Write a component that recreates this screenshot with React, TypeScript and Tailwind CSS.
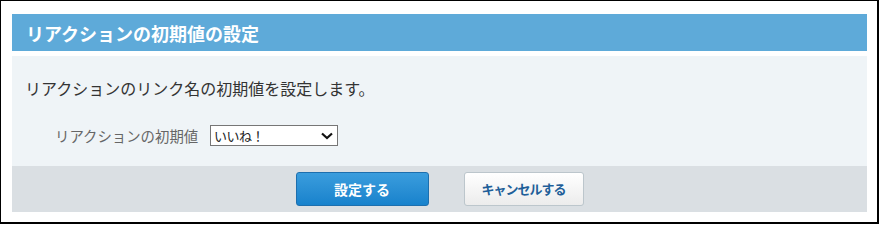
import React from "react";

export default function App() {
  const font = { fontFamily: '"Noto Sans CJK JP", "Noto Sans", sans-serif' };
  return (
    <div style={font} className="w-[879px] h-[224px] bg-white">
      <div className="w-[879px] h-[224px] border-l-[1px] border-t-[1px] border-r-[2px] border-b-[2px] border-black pt-[13px] pl-[11px] pr-[10px]">
        <div className="h-[37px] bg-[#5eaad9] flex items-center px-[14px]">
          <span className="text-white font-bold text-[18px] leading-none">リアクションの初期値の設定</span>
        </div>
        <div className="mt-[5px] h-[110px] bg-[#eff4f7] flex flex-col">
          <div className="pt-[22px] pl-[13px] text-[16px] leading-[20px] text-[#333]">
            リアクションのリンク名の初期値を設定します。
          </div>
          <div className="mt-[27px] flex items-center pl-[43px]">
            <span className="text-[14.4px] leading-[20px] text-[#666] w-[155px]">リアクションの初期値</span>
            <div className="w-[128px] h-[21px] border border-[#767676] bg-white flex items-center justify-between pl-[3px] pr-[4px]">
              <span className="text-[13px] leading-none text-[#222] tracking-[-0.5px]">いいね！</span>
              <svg width="12" height="8" viewBox="0 0 12 8">
                <path d="M1 1.5 L6 6 L11 1.5" fill="none" stroke="#111" strokeWidth="2.2" />
              </svg>
            </div>
          </div>
        </div>
        <div className="h-[46px] bg-[#dadfe3] flex justify-center items-start pt-[6px] gap-[35px]">
          <button className="w-[133px] h-[34px] rounded-[3px] border border-[#1d6fae] bg-gradient-to-b from-[#3a9ddd] to-[#1782cc] text-white font-bold text-[14px]">
            設定する
          </button>
          <button className="w-[120px] h-[34px] rounded-[3px] border border-[#bcc6cc] bg-gradient-to-b from-white to-[#ececec] text-[#1f5f99] font-bold text-[13px] tracking-[-1px]">
            キャンセルする
          </button>
        </div>
      </div>
    </div>
  );
}
